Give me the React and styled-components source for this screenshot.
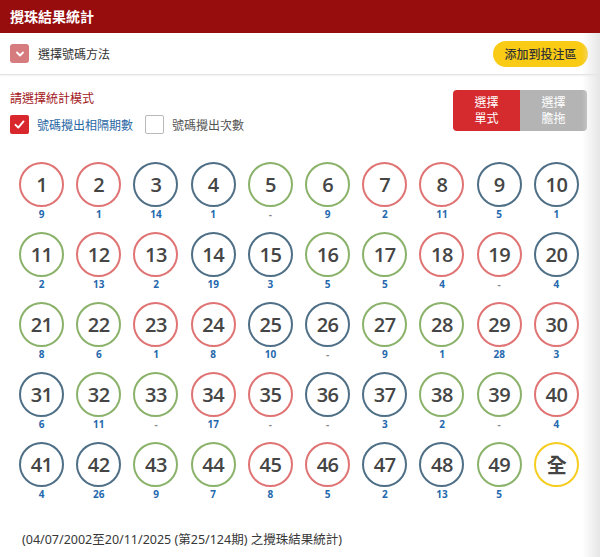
import React from "react";
import styled, { createGlobalStyle } from "styled-components";

const GlobalStyle = createGlobalStyle`
  * { box-sizing: border-box; }
  body {
    margin: 0;
    background: #ffffff;
    font-family: "Noto Sans", "Noto Sans CJK TC", sans-serif;
  }
`;

const CJK = `"Noto Sans", "Noto Sans CJK TC", sans-serif`;
const NUM = `"Open Sans", "Noto Sans CJK TC", sans-serif`;

const Colors = {
  red: "#e07373",
  blue: "#4e6f86",
  green: "#8bb26a",
  gold: "#f6cd1f",
};

const RED = [1, 2, 7, 8, 12, 13, 18, 19, 23, 24, 29, 30, 34, 35, 40, 45, 46];
const BLUE = [3, 4, 9, 10, 14, 15, 20, 25, 26, 31, 36, 37, 41, 42, 47, 48];

const COUNTS = [
  "9", "1", "14", "1", "-", "9", "2", "11", "5", "1",
  "2", "13", "2", "19", "3", "5", "5", "4", "-", "4",
  "8", "6", "1", "8", "10", "-", "9", "1", "28", "3",
  "6", "11", "-", "17", "-", "-", "3", "2", "-", "4",
  "4", "26", "9", "7", "8", "5", "2", "13", "5",
];

const ballColor = (n) => {
  if (RED.includes(n)) return Colors.red;
  if (BLUE.includes(n)) return Colors.blue;
  return Colors.green;
};

const Page = styled.div`
  position: relative;
  width: 600px;
  min-height: 557px;
  overflow: hidden;
  font-family: ${CJK};
`;

const EdgeShade = styled.div`
  position: absolute;
  top: 33px;
  right: 0;
  bottom: 0;
  width: 18px;
  background: linear-gradient(to right, rgba(232, 232, 232, 0), #e6e6e6);
  pointer-events: none;
`;

const Header = styled.div`
  height: 33px;
  padding: 0 10px;
  background: #970c0c;
  color: #ffffff;
  font-size: 14px;
  font-weight: 700;
  line-height: 33px;
`;

const MethodBar = styled.div`
  height: 42px;
  padding: 0 12px 0 10px;
  display: flex;
  align-items: center;
  justify-content: space-between;
  border-bottom: 1px solid #e2e2e2;
  box-shadow: 0 1px 2px rgba(0, 0, 0, 0.05);
`;

const MethodToggle = styled.div`
  display: flex;
  align-items: center;
  gap: 9px;
  font-size: 12px;
  color: #333;
`;

const ChevronBox = styled.span`
  width: 19px;
  height: 19px;
  border-radius: 3px;
  background: #d67b7e;
  display: flex;
  align-items: center;
  justify-content: center;
`;

const AddButton = styled.button`
  height: 26px;
  width: 95px;
  border: none;
  border-radius: 13px;
  background: #f9cb14;
  color: #333;
  font-family: ${CJK};
  font-size: 12px;
  font-weight: 500;
  padding: 0;
  cursor: pointer;
`;

const ModeSection = styled.div`
  padding: 15px 13px 0 10px;
  display: flex;
  justify-content: space-between;
  align-items: flex-start;
`;

const ModeTitle = styled.div`
  font-size: 12px;
  line-height: 18px;
  color: #a3171c;
`;

const OptionRow = styled.div`
  margin-top: 7px;
  display: flex;
  align-items: center;
`;

const Option = styled.label`
  display: flex;
  align-items: center;
  gap: 8px;
  margin-right: 12px;
  font-size: 12px;
  color: ${(p) => (p.$active ? "#2a67a4" : "#555")};
`;

const Box = styled.span`
  width: 19px;
  height: 19px;
  border-radius: 2px;
  display: flex;
  align-items: center;
  justify-content: center;
  background: ${(p) => (p.$checked ? "#d9272e" : "#fff")};
  border: ${(p) => (p.$checked ? "none" : "1.5px solid #b9b9b9")};
`;

const Segmented = styled.div`
  display: flex;
  height: 41px;
  border-radius: 4px;
  overflow: hidden;
`;

const Segment = styled.div`
  width: 67px;
  display: flex;
  align-items: center;
  justify-content: center;
  text-align: center;
  font-size: 12px;
  line-height: 16px;
  color: #fff;
  background: ${(p) => (p.$active ? "#d52a2e" : "#b4b4b4")};
`;

const BallGrid = styled.div`
  padding: 28px 15px 0 13px;
  display: grid;
  grid-template-columns: repeat(10, 1fr);
  row-gap: 12px;
`;

const Cell = styled.div`
  display: flex;
  flex-direction: column;
  align-items: center;
`;

const Ball = styled.div`
  width: 45px;
  height: 45px;
  border-radius: 50%;
  border: 2px solid ${(p) => p.$color};
  display: flex;
  align-items: center;
  justify-content: center;
  font-family: ${(p) => (p.$cjk ? CJK : NUM)};
  font-size: 20px;
  font-weight: 600;
  letter-spacing: -0.5px;
  color: #454545;
`;

const Count = styled.div`
  margin-top: 1px;
  height: 12px;
  font-family: ${NUM};
  font-size: 10px;
  line-height: 12px;
  font-weight: 700;
  color: ${(p) => (p.$empty ? "#8a8a8a" : "#2468ad")};
`;

const Footer = styled.div`
  margin-top: 31px;
  padding-left: 22px;
  font-size: 12.5px;
  line-height: 18px;
  color: #383838;
`;

const Chevron = () => (
  <svg width="12" height="12" viewBox="0 0 12 12">
    <path d="M3 4.5 L6 7.5 L9 4.5" fill="none" stroke="#fff" strokeWidth="1.8" strokeLinecap="round" strokeLinejoin="round" />
  </svg>
);

const Check = () => (
  <svg width="13" height="13" viewBox="0 0 13 13">
    <path d="M2.5 6.8 L5.3 9.6 L10.5 3.4" fill="none" stroke="#fff" strokeWidth="1.9" strokeLinecap="round" strokeLinejoin="round" />
  </svg>
);

export default function App() {
  const numbers = Array.from({ length: 49 }, (_, i) => i + 1);

  return (
    <Page>
      <GlobalStyle />
      <Header>攪珠結果統計</Header>
      <MethodBar>
        <MethodToggle>
          <ChevronBox>
            <Chevron />
          </ChevronBox>
          選擇號碼方法
        </MethodToggle>
        <AddButton>添加到投注區</AddButton>
      </MethodBar>

      <ModeSection>
        <div>
          <ModeTitle>請選擇統計模式</ModeTitle>
          <OptionRow>
            <Option $active>
              <Box $checked>
                <Check />
              </Box>
              號碼攪出相隔期數
            </Option>
            <Option>
              <Box />
              號碼攪出次數
            </Option>
          </OptionRow>
        </div>
        <Segmented>
          <Segment $active>
            選擇
            <br />
            單式
          </Segment>
          <Segment>
            選擇
            <br />
            膽拖
          </Segment>
        </Segmented>
      </ModeSection>

      <BallGrid>
        {numbers.map((n) => (
          <Cell key={n}>
            <Ball $color={ballColor(n)}>{n}</Ball>
            <Count $empty={COUNTS[n - 1] === "-"}>{COUNTS[n - 1]}</Count>
          </Cell>
        ))}
        <Cell>
          <Ball $color={Colors.gold} $cjk>全</Ball>
        </Cell>
      </BallGrid>

      <Footer>(04/07/2002至20/11/2025 (第25/124期) 之攪珠結果統計)</Footer>
      <EdgeShade />
    </Page>
  );
}
